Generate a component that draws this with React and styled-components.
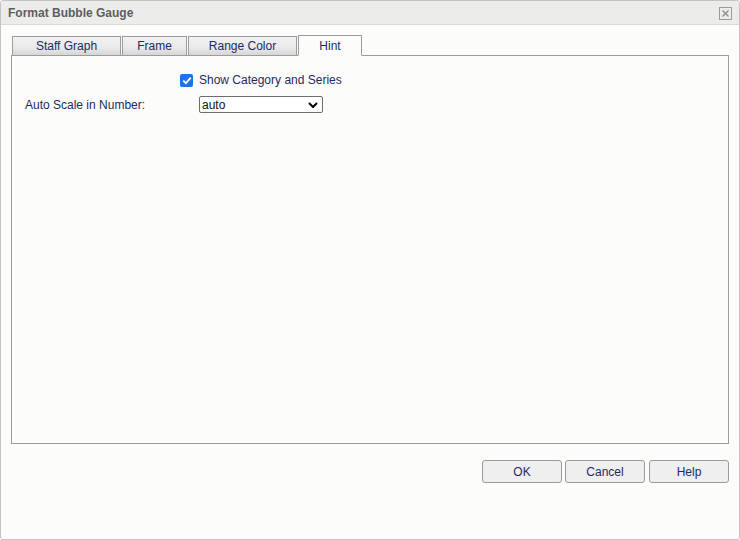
import React, { useState } from "react";
import styled, { createGlobalStyle } from "styled-components";

const GlobalStyle = createGlobalStyle`
  html, body {
    margin: 0;
    padding: 0;
    background: #ffffff;
  }
  body {
    font-family: "Liberation Sans", Arial, sans-serif;
    font-size: 12px;
  }
`;

const Dialog = styled.div`
  width: 740px;
  height: 540px;
  box-sizing: border-box;
  border: 1px solid #c4c4c4;
  border-radius: 3px;
  background: #fcfdfb;
  display: flex;
  flex-direction: column;
  overflow: hidden;
`;

const TitleBar = styled.div`
  height: 23px;
  flex: none;
  background: #ecedeb;
  border-bottom: 1px solid #d8d9d7;
  display: flex;
  align-items: center;
  justify-content: space-between;
  padding: 0 7px 0 7px;
`;

const Title = styled.div`
  font-weight: bold;
  font-size: 12px;
  color: #5e5e5e;
`;

const CloseBox = styled.div`
  width: 11px;
  height: 11px;
  border: 1px solid #9a9a9a;
  display: flex;
  align-items: center;
  justify-content: center;
  margin-top: 1px;
`;

const Body = styled.div`
  flex: 1;
  display: flex;
  flex-direction: column;
  padding: 11px 10px 0 10px;
`;

const TabRow = styled.div`
  display: flex;
  gap: 1px;
  padding-left: 1px;
  height: 20px;
  align-items: flex-end;
  position: relative;
  z-index: 1;
`;

const Tab = styled.div`
  box-sizing: border-box;
  width: ${(p) => p.$w}px;
  height: ${(p) => (p.$active ? 21 : 20)}px;
  border: 1px solid #9c9c9c;
  border-bottom: ${(p) => (p.$active ? "1px solid #fcfdfb" : "1px solid #9c9c9c")};
  background: ${(p) =>
    p.$active ? "#fcfdfb" : "linear-gradient(#f2f2f2, #e9e9e9 60%, #d6d6d6)"};
  color: #1b2a63;
  display: flex;
  align-items: center;
  justify-content: center;
  padding-top: ${(p) => (p.$active ? 1 : 0)}px;
  cursor: default;
`;

const Panel = styled.div`
  box-sizing: border-box;
  height: 389px;
  margin-top: -1px;
  border: 1px solid #9c9c9c;
  padding: 16px 13px 0 13px;
  display: flex;
  flex-direction: column;
  gap: 8px;
`;

const Row = styled.div`
  display: flex;
  align-items: center;
  height: ${(p) => p.$h}px;
`;

const Label = styled.div`
  width: 174px;
  color: #1b2a63;
`;

const CheckLabel = styled.label`
  display: flex;
  align-items: center;
  gap: 6px;
  margin-left: 155px;
  color: #1b2a63;
`;

const CheckBox = styled.span`
  width: 13px;
  height: 13px;
  border-radius: 2px;
  background: #1a73e8;
  display: flex;
  align-items: center;
  justify-content: center;
`;

const Select = styled.select`
  width: 124px;
  height: 17px;
  box-sizing: border-box;
  border: 1px solid #6e6e6e;
  border-radius: 2px;
  font-family: "Liberation Sans", Arial, sans-serif;
  font-size: 12px;
  color: #111;
  background: #fff;
  padding: 0 0 0 2px;
  appearance: none;
  background-image: url("data:image/svg+xml;utf8,<svg xmlns='http://www.w3.org/2000/svg' width='10' height='6'><path d='M1 1l4 4 4-4' fill='none' stroke='black' stroke-width='2'/></svg>");
  background-repeat: no-repeat;
  background-position: right 4px center;
`;

const Footer = styled.div`
  display: flex;
  justify-content: flex-end;
  gap: 4px;
  padding-top: 16px;
`;

const Button = styled.button`
  width: 80px;
  height: 23px;
  box-sizing: border-box;
  border: 1px solid #9a9a9a;
  border-radius: 3px;
  background: #efefef;
  color: #1b2a63;
  font-family: "Liberation Sans", Arial, sans-serif;
  font-size: 12px;
  padding: 0;
  margin-right: ${(p) => (p.$tight ? -1 : 0)}px;
`;

const tabs = [
  { name: "Staff Graph", w: 109 },
  { name: "Frame", w: 65 },
  { name: "Range Color", w: 109 },
  { name: "Hint", w: 64 },
];

export default function App() {
  const [active, setActive] = useState("Hint");
  const [checked, setChecked] = useState(true);

  return (
    <>
      <GlobalStyle />
      <Dialog>
        <TitleBar>
          <Title>Format Bubble Gauge</Title>
          <CloseBox>
            <svg width="9" height="9" viewBox="0 0 9 9">
              <path d="M1.5 1.5l6 6M7.5 1.5l-6 6" stroke="#8a8a8a" strokeWidth="1.3" />
            </svg>
          </CloseBox>
        </TitleBar>
        <Body>
          <TabRow>
            {tabs.map((t) => (
              <Tab
                key={t.name}
                $w={t.w}
                $active={active === t.name}
                onClick={() => setActive(t.name)}
              >
                {t.name}
              </Tab>
            ))}
          </TabRow>
          <Panel>
            <Row $h={16}>
              <CheckLabel onClick={() => setChecked(!checked)}>
                <CheckBox>
                  {checked && (
                    <svg width="10" height="9" viewBox="0 0 10 9">
                      <path d="M1.3 4.6l2.6 2.6L8.8 1.6" fill="none" stroke="#fff" strokeWidth="1.8" />
                    </svg>
                  )}
                </CheckBox>
                Show Category and Series
              </CheckLabel>
            </Row>
            <Row $h={17}>
              <Label>Auto Scale in Number:</Label>
              <Select defaultValue="auto">
                <option value="auto">auto</option>
                <option value="K">K</option>
                <option value="M">M</option>
                <option value="B">B</option>
              </Select>
            </Row>
          </Panel>
          <Footer>
            <Button $tight>OK</Button>
            <Button>Cancel</Button>
            <Button>Help</Button>
          </Footer>
        </Body>
      </Dialog>
    </>
  );
}
